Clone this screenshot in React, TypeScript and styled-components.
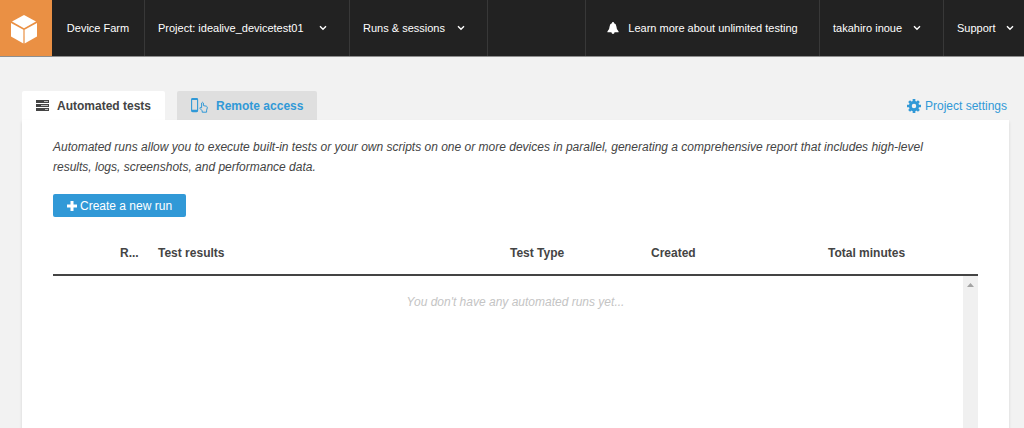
import React from "react";
import styled, { createGlobalStyle } from "styled-components";

const GlobalStyle = createGlobalStyle`
  *, *::before, *::after { box-sizing: border-box; }
  body {
    margin: 0;
    background: #f2f2f2;
    color: #444;
    font-family: Arial, "Liberation Sans", sans-serif;
    font-size: 12px;
  }
`;

const Page = styled.div`
  display: flex;
  flex-direction: column;
  min-height: 100vh;
`;

const NavBar = styled.nav`
  display: flex;
  height: 57px;
  flex: none;
  background: #222;
  border-bottom: 1px solid #8e8e8e;
`;

const HomeLink = styled.a`
  display: flex;
  flex: none;
  align-items: center;
  justify-content: center;
  width: 52px;
  padding: 2px 4px 0 0;
  background: #ea9044;
`;

const navCell = `
  display: flex;
  flex: none;
  align-items: center;
  justify-content: space-between;
  padding: 0 22px 0 13px;
  border: 0;
  border-right: 1px solid #383838;
  background: transparent;
  color: #fff;
  font: inherit;
  font-size: 11px;
  text-decoration: none;
  white-space: nowrap;
  cursor: pointer;
`;

const NavLink = styled.a<{ $width: number }>`
  ${navCell}
  justify-content: center;
  gap: 9px;
  padding: 0 13px;
  width: ${(p) => p.$width}px;
`;

const NavButton = styled.button<{ $width: number; $last?: boolean }>`
  ${navCell}
  width: ${(p) => p.$width}px;
  ${(p) => p.$last && "padding-right: 10px; border-right-width: 0;"}
`;

const NavSpacer = styled.div`
  flex: 1;
  border-right: 1px solid #383838;
`;

const Main = styled.main`
  display: flex;
  flex: 1;
  flex-direction: column;
  padding: 34px 15px 0 22px;
`;

const TabBar = styled.div`
  display: flex;
  align-items: flex-end;
  justify-content: space-between;
`;

const Tabs = styled.div`
  display: flex;
  gap: 12px;
`;

const Tab = styled.button<{ $active?: boolean }>`
  display: flex;
  align-items: center;
  gap: 8px;
  height: 29px;
  padding: 0 14px;
  border: 0;
  border-radius: 2px 2px 0 0;
  background: ${(p) => (p.$active ? "#fff" : "#dfdfdf")};
  color: ${(p) => (p.$active ? "#444" : "#3199d7")};
  font: inherit;
  font-weight: bold;
  cursor: pointer;
`;

const SettingsLink = styled.a`
  display: flex;
  align-items: center;
  gap: 4px;
  height: 29px;
  padding-right: 2px;
  color: #3199d7;
  text-decoration: none;
`;

const Panel = styled.section`
  display: flex;
  flex: 1;
  flex-direction: column;
  padding: 17px 31px 0;
  background: #fff;
  box-shadow: 0 2px 3px rgba(0, 0, 0, 0.12);
`;

const Intro = styled.p`
  margin: 0 0 17px;
  padding-right: 24px;
  line-height: 20px;
  font-style: italic;
`;

const CreateButton = styled.button`
  display: flex;
  align-items: center;
  align-self: flex-start;
  gap: 3px;
  height: 23px;
  padding: 0 14px;
  border: 0;
  border-radius: 2px;
  background: #3199d7;
  color: #fff;
  font: inherit;
  cursor: pointer;
`;

const RunsTable = styled.table`
  width: 100%;
  margin-top: 16px;
  table-layout: fixed;
  border-collapse: collapse;
  border-bottom: 2px solid #444;
`;

const HeaderCell = styled.th<{ $width?: number }>`
  width: ${(p) => (p.$width ? `${p.$width}px` : "auto")};
  height: 42px;
  padding: 0 8px 2px;
  text-align: left;
  white-space: nowrap;
`;

const RunsBody = styled.div`
  display: flex;
  flex: 1;
`;

const EmptyMessage = styled.p`
  flex: 1;
  margin: 0;
  padding: 16px 0 0 15px;
  color: #c4c4c4;
  line-height: 20px;
  font-style: italic;
  text-align: center;
`;

const ScrollTrack = styled.div`
  width: 15px;
  padding: 7px 4px;
  background: #f0f0f0;
`;

const Arrow = styled.svg`
  display: block;
`;

const Chevron = () => (
  <svg width="8" height="6" viewBox="0 0 8 6" fill="none" stroke="currentColor" strokeWidth="1.4" aria-hidden="true">
    <path d="M1 1.2 4 4.2 7 1.2" />
  </svg>
);

const CubeLogo = () => (
  <svg width="26" height="29" viewBox="0 0 26 29" fill="#fff" aria-hidden="true">
    <path d="M13 0 25 6.6 13 13.2 1 6.6Z" />
    <path d="M0 8 12.4 14.8V28.5L0 21.5Z" />
    <path d="M26 8 13.6 14.8V28.5L26 21.5Z" />
  </svg>
);

const BellIcon = () => (
  <svg width="12" height="12" viewBox="0 0 12 12" fill="currentColor" aria-hidden="true">
    <path d="M5.2 0H6.8V.9Q9.3 1.6 9.4 4.6 9.5 8 11.6 9.6V10.3H7.6Q7.4 11.9 6 11.9T4.4 10.3H.4V9.6Q2.5 8 2.6 4.6 2.7 1.6 5.2 .9Z" />
  </svg>
);

const GearIcon = () => (
  <svg width="14" height="14" viewBox="-7 -7 14 14" fill="none" stroke="currentColor" aria-hidden="true">
    <circle r="3.7" strokeWidth="2.9" />
    <path
      strokeWidth="2.7"
      d="M0-4.6V-7M0 4.6V7M-4.6 0H-7M4.6 0H7M3.3-3.3 4.9-4.9M-3.3-3.3-4.9-4.9M3.3 3.3 4.9 4.9M-3.3 3.3-4.9 4.9"
    />
  </svg>
);

const TasksIcon = () => (
  <svg width="13" height="11" viewBox="0 0 13 11" aria-hidden="true">
    <path fill="#444" d="M0 0h13v3H0zM0 4h13v3H0zM0 8h13v3H0z" />
    <path fill="#bbb" d="M8 1h4v1H8zM5 5h7v1H5zM9 9h3v1H9z" />
  </svg>
);

const DeviceTouchIcon = () => (
  <svg width="17" height="15" viewBox="0 0 17 15" fill="none" stroke="currentColor" aria-hidden="true">
    <rect x=".6" y=".6" width="6" height="13" rx="1" strokeWidth="1.1" />
    <path strokeWidth="1.8" d="M.6 1.2H6.6M.6 12.6H6.6" />
    <path
      strokeWidth="1"
      strokeLinejoin="round"
      d="M10.6 9.8V5Q11.5 3.6 12.4 5V7.6L15.4 8.2Q16.4 8.6 16.3 9.8L15.6 12.2V14.2H11.2V12.8L8.8 10.2Q8.8 8.8 10.6 9.8"
    />
  </svg>
);

const PlusIcon = () => (
  <svg width="10" height="10" viewBox="0 0 10 10" fill="currentColor" aria-hidden="true">
    <path d="M3.5 0h3v3.5H10v3H6.5V10h-3V6.5H0v-3h3.5z" />
  </svg>
);

export default function App() {
  return (
    <>
      <GlobalStyle />
      <Page>
        <NavBar>
          <HomeLink href="#" aria-label="Home"><CubeLogo /></HomeLink>
          <NavLink href="#" $width={93}>Device Farm</NavLink>
          <NavButton $width={205}>Project: idealive_devicetest01 <Chevron /></NavButton>
          <NavButton $width={138}>Runs &amp; sessions <Chevron /></NavButton>
          <NavSpacer />
          <NavLink href="#" $width={234}><BellIcon />Learn more about unlimited testing</NavLink>
          <NavButton $width={124}>takahiro inoue <Chevron /></NavButton>
          <NavButton $width={80} $last>Support <Chevron /></NavButton>
        </NavBar>
        <Main>
          <TabBar>
            <Tabs role="tablist">
              <Tab role="tab" aria-selected="true" $active><TasksIcon />Automated tests</Tab>
              <Tab role="tab" aria-selected="false"><DeviceTouchIcon />Remote access</Tab>
            </Tabs>
            <SettingsLink href="#"><GearIcon />Project settings</SettingsLink>
          </TabBar>
          <Panel>
            <Intro>
              Automated runs allow you to execute built-in tests or your own scripts on one or more devices in parallel, generating a comprehensive report that includes high-level results, logs, screenshots, and performance data.
            </Intro>
            <CreateButton><PlusIcon />Create a new run</CreateButton>
            <RunsTable>
              <thead>
                <tr>
                  <HeaderCell $width={59} aria-label="Select" />
                  <HeaderCell $width={38}>R...</HeaderCell>
                  <HeaderCell>Test results</HeaderCell>
                  <HeaderCell $width={141}>Test Type</HeaderCell>
                  <HeaderCell $width={177}>Created</HeaderCell>
                  <HeaderCell $width={158}>Total minutes</HeaderCell>
                </tr>
              </thead>
            </RunsTable>
            <RunsBody>
              <EmptyMessage>You don't have any automated runs yet...</EmptyMessage>
              <ScrollTrack>
                <Arrow width="7" height="4" viewBox="0 0 7 4" aria-hidden="true"><path fill="#a3a3a3" d="M3.5 0 7 4H0z" /></Arrow>
              </ScrollTrack>
            </RunsBody>
          </Panel>
        </Main>
      </Page>
    </>
  );
}
